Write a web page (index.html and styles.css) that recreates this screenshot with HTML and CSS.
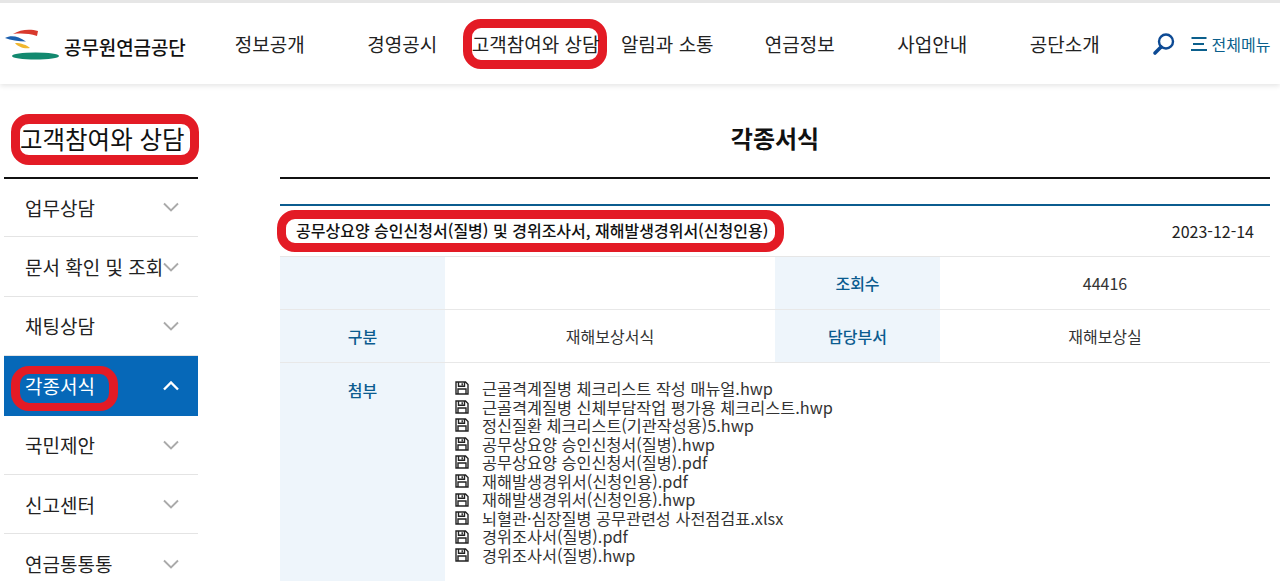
FILE: index.html
```html
<!DOCTYPE html>
<html lang="ko">
  <head>
    <meta charset="utf-8">
    <title>각종서식 - 공무원연금공단</title>
    <link rel="stylesheet" href="styles.css">
  </head>

  <body>
    <svg class="defs" width="0" height="0">
      <symbol id="disk" viewBox="0 0 14 14">
        <path d="M1 1h9.5L13 3.5V13H1z M3.5 1v4.2h6V1 M3 13V8h8v5 M7.2 2.2v2" fill="none" stroke="#222" stroke-width="1.4"/>
      </symbol>
      <symbol id="chev" viewBox="0 0 16 10">
        <path d="M1 1.5l7 7 7-7" fill="none" stroke="currentColor"/>
      </symbol>
    </svg>

    <header class="top">
      <a class="logo">
        <svg width="60" height="34" viewBox="0 0 60 34">
          <path d="M13 7C20 2.500 30 1.500 38 4l-1 5C29 6.500 21 6 13 7z" fill="#d8392c"/>
          <path d="M5 11C11 8 18 9 26 14.500 18 14.500 11 13 5 11z" fill="#1c5fae"/>
          <path d="M15 16C21 16 27 18 30 21 24 22 18 20 15 16z" fill="#f0b72f"/>
          <ellipse cx="35.500" cy="29" rx="23.500" ry="3.600" fill="#12896f"/>
        </svg>
        <span class="logo-name">공무원연금공단</span>
      </a>
      <nav class="gnb">
        <a>정보공개</a>
        <a>경영공시</a>
        <a><span class="mark mark-nav">고객참여와 상담</span></a>
        <a>알림과 소통</a>
        <a>연금정보</a>
        <a>사업안내</a>
        <a>공단소개</a>
      </nav>
      <div class="tools">
        <svg width="24" height="24" viewBox="0 0 24 24">
          <circle cx="14" cy="9.500" r="7" fill="none" stroke="#0d4a94" stroke-width="2.400"/>
          <path d="M9 15l-6 6" stroke="#0d4a94" stroke-width="3.600" stroke-linecap="round"/>
        </svg>
        <a class="all-menu">
          <svg width="16" height="14" viewBox="0 0 16 14">
            <path d="M0.500 1h15M2 7h11M0 13h16" stroke="#0b5f8c" stroke-width="2"/>
          </svg>
          전체메뉴
        </a>
      </div>
    </header>

    <div class="wrap">
      <aside class="side">
        <h2 class="side-title"><span class="mark mark-side">고객참여와 상담</span></h2>
        <ul class="side-menu">
          <li><span>업무상담</span><svg class="chev"><use href="#chev"/></svg></li>
          <li><span>문서 확인 및 조회</span><svg class="chev"><use href="#chev"/></svg></li>
          <li><span>채팅상담</span><svg class="chev"><use href="#chev"/></svg></li>
          <li class="on"><span class="mark mark-item">각종서식</span><svg class="chev up"><use href="#chev"/></svg></li>
          <li><span>국민제안</span><svg class="chev"><use href="#chev"/></svg></li>
          <li><span>신고센터</span><svg class="chev"><use href="#chev"/></svg></li>
          <li><span>연금통통통</span><svg class="chev"><use href="#chev"/></svg></li>
        </ul>
      </aside>

      <main class="content">
        <h1 class="page-title">각종서식</h1>
        <section class="board">
          <div class="subject">
            <span class="mark mark-subject">공무상요양 승인신청서(질병) 및 경위조사서, 재해발생경위서(신청인용)</span>
            <span class="date">2023-12-14</span>
          </div>
          <div class="row">
            <div class="th"></div>
            <div class="td"></div>
            <div class="th">조회수</div>
            <div class="td">44416</div>
          </div>
          <div class="row">
            <div class="th">구분</div>
            <div class="td">재해보상서식</div>
            <div class="th">담당부서</div>
            <div class="td">재해보상실</div>
          </div>
          <div class="row row-files">
            <div class="th">첨부</div>
            <ul class="files">
              <li><svg class="disk"><use href="#disk"/></svg>근골격계질병 체크리스트 작성 매뉴얼.hwp</li>
              <li><svg class="disk"><use href="#disk"/></svg>근골격계질병 신체부담작업 평가용 체크리스트.hwp</li>
              <li><svg class="disk"><use href="#disk"/></svg>정신질환 체크리스트(기관작성용)5.hwp</li>
              <li><svg class="disk"><use href="#disk"/></svg>공무상요양 승인신청서(질병).hwp</li>
              <li><svg class="disk"><use href="#disk"/></svg>공무상요양 승인신청서(질병).pdf</li>
              <li><svg class="disk"><use href="#disk"/></svg>재해발생경위서(신청인용).pdf</li>
              <li><svg class="disk"><use href="#disk"/></svg>재해발생경위서(신청인용).hwp</li>
              <li><svg class="disk"><use href="#disk"/></svg>뇌혈관·심장질병 공무관련성 사전점검표.xlsx</li>
              <li><svg class="disk"><use href="#disk"/></svg>경위조사서(질병).pdf</li>
              <li><svg class="disk"><use href="#disk"/></svg>경위조사서(질병).hwp</li>
            </ul>
          </div>
        </section>
      </main>
    </div>
  </body>
</html>
```

FILE: styles.css
```css
html, body {
  margin: 0;
  padding: 0;
  height: 581px;
  overflow: hidden;
  background: #fff;
  color: #222;
  font-family: "Noto Sans CJK KR", "Noto Sans", sans-serif;
}
ul {
  list-style: none;
  margin: 0;
  padding: 0;
}
.defs {
  display: block;
  height: 0;
}

/* red marker round a text */
.mark {
  display: inline-block;
  flex: none;
  box-sizing: border-box;
  border: 9px solid #e31b25;
  background: #fff;
  white-space: nowrap;
}
.mark-nav {
  width: 144px;
  height: 50px;
  line-height: 32px;
  border-radius: 18px;
  text-align: center;
}
.mark-side {
  width: 188px;
  height: 51px;
  margin: 1px 0 0 7px;
  border-width: 10px 9px;
  line-height: 29px;
  border-radius: 18px;
}
.mark-item {
  width: 107px;
  height: 45px;
  margin: 5px 0 0 -14px;
  padding-left: 5px;
  border-width: 8px 9px;
  border-radius: 18px;
  line-height: 23px;
  background: transparent;
}
.mark-subject {
  width: 507px;
  height: 42px;
  margin-left: -3px;
  padding-left: 10px;
  border-radius: 18px;
  line-height: 23px;
  color: #111;
  font-weight: 500;
}

/* header */
.top {
  display: flex;
  align-items: center;
  box-sizing: border-box;
  height: 84px;
  border-top: 3px solid #e6e6e6;
  box-shadow: 0 2px 5px rgba(0, 0, 0, 0.1);
}
.logo {
  display: flex;
  align-items: center;
  width: 203.5px;
  flex: none;
}
.logo-name {
  margin-left: 4px;
  margin-top: 5px;
  font-size: 19px;
  font-weight: 500;
  letter-spacing: -0.1px;
  color: #111;
  white-space: nowrap;
}
.gnb {
  display: grid;
  grid-template-columns: repeat(7, 132.5px);
  flex: none;
  font-size: 19px;
  color: #222;
  text-align: center;
}
.gnb a {
  display: flex;
  justify-content: center;
  align-items: center;
  height: 51px;
  white-space: nowrap;
}
.tools {
  display: flex;
  align-items: center;
  margin-left: 20.5px;
  flex: none;
}
.all-menu {
  display: flex;
  align-items: center;
  gap: 5px;
  margin-left: 15px;
  font-size: 16px;
  color: #0b5f8c;
  white-space: nowrap;
}

/* layout */
.wrap {
  display: flex;
  padding-left: 4px;
}
.side {
  width: 194px;
  flex: none;
}
.side-title {
  display: flex;
  height: 64px;
  margin: 29px 0 0;
  border-bottom: 2px solid #111;
  font-size: 24.5px;
  font-weight: 400;
  color: #111;
}
.side-menu {
  margin-top: -1px;
}
.side-menu li {
  display: flex;
  align-items: center;
  justify-content: space-between;
  box-sizing: border-box;
  height: 59.4px;
  padding: 0 19px 0 21px;
  border-bottom: 1px solid #e4e4e4;
  font-size: 19px;
  color: #222;
  white-space: nowrap;
}
.side-menu li.on {
  background: #0668b8;
  color: #fff;
  border-bottom: 0;
}
.chev {
  width: 16px;
  height: 10px;
  flex: none;
  color: #aaa;
  stroke-width: 1.9;
}
.chev.up {
  color: #fff;
  stroke-width: 2.4;
  transform: rotate(180deg);
}

.content {
  width: 990px;
  margin-left: 82px;
  flex: none;
}
.page-title {
  height: 64px;
  margin: 29px 0 0;
  border-bottom: 2px solid #111;
  font-size: 24px;
  font-weight: 700;
  line-height: 50px;
  text-align: center;
  color: #111;
}
.board {
  margin-top: 25px;
  border-top: 2px solid #0b5c8f;
  font-size: 16px;
}
.subject {
  display: flex;
  align-items: center;
  justify-content: space-between;
  box-sizing: border-box;
  height: 51px;
  padding-right: 16px;
  border-bottom: 1px solid #e6e6e6;
}
.date {
  color: #222;
}
.row {
  display: grid;
  grid-template-columns: 165px 330px 165px 330px;
  box-sizing: border-box;
  height: 53px;
  border-bottom: 1px solid #e8e8e8;
}
.th, .td {
  display: flex;
  align-items: center;
  justify-content: center;
}
.th {
  background: #eef5fb;
  color: #0b5c8f;
  font-weight: 500;
}
.td {
  color: #333;
}
.row-files {
  grid-template-columns: 165px 825px;
  height: 230px;
  border-bottom: 0;
}
.row-files .th {
  align-items: flex-start;
  padding-top: 15px;
}
.files {
  padding: 16px 0 0 10px;
  font-size: 16.3px;
  line-height: 18.55px;
  color: #333;
}
.files li {
  display: flex;
  align-items: center;
  white-space: nowrap;
}
.disk {
  width: 14px;
  height: 14px;
  margin-right: 13px;
  flex: none;
}
```
